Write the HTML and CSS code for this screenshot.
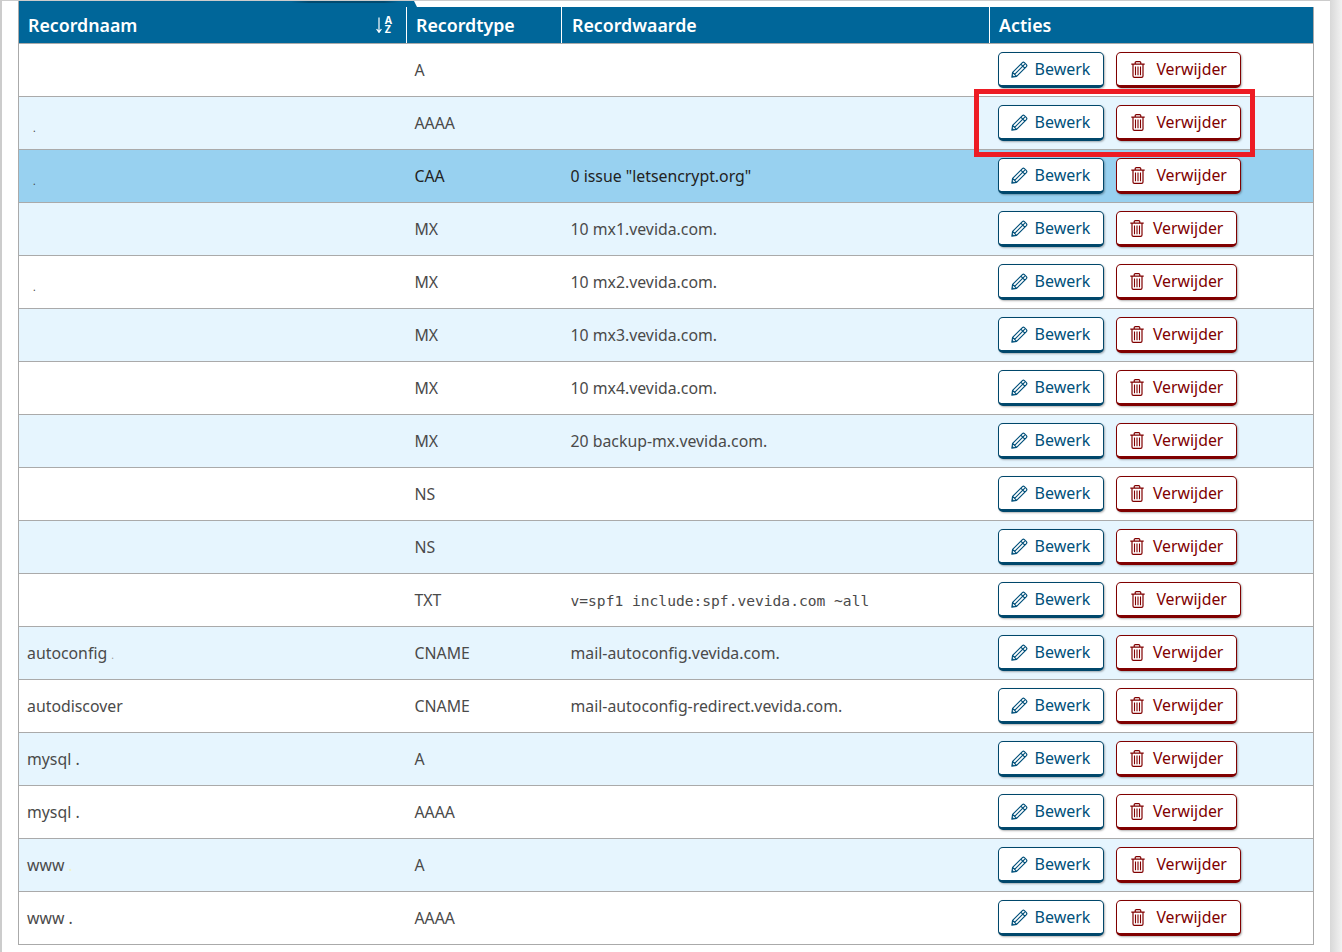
FILE: index.html
```html
<!DOCTYPE html>
<html lang="nl">
<head>
    <meta charset="UTF-8">
    <meta name="viewport" content="width=device-width, initial-scale=1.0">
    <title>DNS records</title>
    <link rel="stylesheet" href="styles.css">
</head>
<body>
    <svg class="icon-defs" width="0" height="0">
        <symbol id="icon-pencil" viewBox="0 0 17 17">
            <path d="M11.4 1.6Q12.4.7 13.4 1.6L15.4 3.6Q16.3 4.6 15.4 5.6L5.6 15.4 .9 16.1 1.6 11.4Z M1.6 11.4 5.6 15.4 M3.6 13.4 13.8 3.2 M9.8 3.2 13.8 7.2" fill="none" stroke="currentColor" stroke-width="1.2" stroke-linejoin="round"/>
            <path d="M.9 16.1 1.3 13.8 3.2 15.7Z" fill="currentColor"/>
        </symbol>
        <symbol id="icon-trash" viewBox="0 0 14 17">
            <path d="M.3 3.2H13.7 M2 3.2V15Q2 16.4 3.4 16.4H10.6Q12 16.4 12 15V3.2 M4.2 3.2V1.8Q4.2 .7 5.3 .7H8.7Q9.8 .7 9.8 1.8V3.2" fill="none" stroke="currentColor" stroke-width="1.2"/>
            <path d="M4.5 5.5V14.2 M7 5.5V14.2 M9.5 5.5V14.2" fill="none" stroke="currentColor" stroke-width="1.1"/>
        </symbol>
        <symbol id="icon-sort" viewBox="0 0 6 16">
            <path d="M3 .5V15 M.6 12 3 15.4 5.4 12" fill="none" stroke="currentColor" stroke-width="1.2"/>
        </symbol>
    </svg>

    <div class="page">
        <div class="tab-strip"></div>
        <table class="records">
            <colgroup>
                <col class="col-name">
                <col class="col-type">
                <col class="col-value">
                <col class="col-actions">
            </colgroup>
            <thead>
                <tr>
                    <th>
                        <div class="th-sort">
                            <span>Recordnaam</span>
                            <span class="sort-icon">
                                <svg width="6" height="16"><use href="#icon-sort"/></svg>
                                <span class="sort-letters">A<br>Z</span>
                            </span>
                        </div>
                    </th>
                    <th>Recordtype</th>
                    <th>Recordwaarde</th>
                    <th>Acties</th>
                </tr>
            </thead>
            <tbody id="rows"></tbody>
        </table>
        <div class="highlight-box"></div>
    </div>

    <script>
        // naam, klein puntje, type, waarde, brede verwijderknop
        const records = [
            ['', '', 'A', '', true],
            ['', 'dot-a', 'AAAA', '', true],
            ['', 'dot-a', 'CAA', '0 issue "letsencrypt.org"', true],
            ['', '', 'MX', '10 mx1.vevida.com.', false],
            ['', 'dot-a', 'MX', '10 mx2.vevida.com.', false],
            ['', '', 'MX', '10 mx3.vevida.com.', false],
            ['', '', 'MX', '10 mx4.vevida.com.', false],
            ['', '', 'MX', '20 backup-mx.vevida.com.', false],
            ['', '', 'NS', '', false],
            ['', '', 'NS', '', false],
            ['', '', 'TXT', 'v=spf1 include:spf.vevida.com ~all', true],
            ['autoconfig', 'dot-c', 'CNAME', 'mail-autoconfig.vevida.com.', false],
            ['autodiscover', '', 'CNAME', 'mail-autoconfig-redirect.vevida.com.', false],
            ['mysql .', '', 'A', '', false],
            ['mysql .', '', 'AAAA', '', false],
            ['www', 'dot-d', 'A', '', true],
            ['www .', '', 'AAAA', '', true]
        ];

        const tbody = document.getElementById('rows');

        records.forEach((r, index) => {
            const tr = document.createElement('tr');
            if (index === 2) {
                tr.className = 'selected';
            } else if (index % 2 === 1) {
                tr.className = 'odd';
            }

            const dot = r[1] ? `<span class="dot ${r[1]}">.</span>` : '';
            const value = r[2] === 'TXT' ? `<code>${r[3]}</code>` : r[3];
            const wide = r[4] ? ' btn-wide' : '';

            tr.innerHTML = `
                <td>${r[0]}${dot}</td>
                <td>${r[2]}</td>
                <td>${value}</td>
                <td class="actions">
                    <a class="btn btn-edit"><svg width="17" height="17"><use href="#icon-pencil"/></svg>Bewerk</a>
                    <a class="btn btn-delete${wide}"><svg width="14" height="17"><use href="#icon-trash"/></svg>Verwijder</a>
                </td>`;
            tbody.appendChild(tr);
        });
    </script>
</body>
</html>
```

FILE: styles.css
```css
* {
    margin: 0;
    padding: 0;
    box-sizing: border-box;
}

html,
body {
    height: 100%;
}

body {
    font-family: "Noto Sans", "Open Sans", sans-serif;
    font-size: 15.84px;
    color: #4a4a4a;
    background:
        linear-gradient(#ccc, #ccc) 0 0 / 1330px 1px no-repeat,
        linear-gradient(90deg, #ccc 0, #ccc 2px, #fff 2px, #fff 1330px, #d8d8d8 1330px, #f2f2f2 1342px);
    overflow: hidden;
}

.icon-defs {
    position: absolute;
}

.page {
    position: relative;
    width: 1342px;
    padding: 7px 0 0 18px;
}

/* rand van de tabbalk boven de tabel */
.tab-strip {
    position: absolute;
    top: 1px;
    left: 18px;
    width: 399px;
    height: 6px;
    border-left: 1px solid #aaa;
    background:
        linear-gradient(90deg, transparent 0, transparent 272px, #004a70 290px, #004a70 365px, transparent 380px) 0 0 / 100% 2px no-repeat,
        #006699;
    clip-path: polygon(0 0, 396px 0, 100% 100%, 0 100%);
}

.records {
    width: 1296px;
    table-layout: fixed;
    border-collapse: collapse;
    border-left: 1px solid #aaa;
    border-right: 1px solid #aaa;
}

.col-name {
    width: 388px;
}

.col-type {
    width: 155px;
}

.col-value {
    width: 428px;
}

.records th {
    height: 36px;
    padding: 0 9px;
    background-color: #006699;
    border-left: 1px solid #fff;
    border-bottom: 1px solid #aaa;
    color: #fff;
    font-size: 17.8px;
    font-weight: 600;
    text-align: left;
}

.records th:first-child {
    border-left: 0;
}

.records th:nth-child(3) {
    padding-left: 10px;
}

.th-sort {
    display: flex;
    justify-content: space-between;
    align-items: center;
}

.sort-icon {
    display: flex;
    align-items: center;
    gap: 3px;
    padding-right: 5px;
}

.sort-letters {
    font-size: 10.5px;
    font-weight: 700;
    line-height: 9px;
}

.records td {
    height: 53px;
    padding: 0 8px;
    border-bottom: 1px solid #aaa;
    vertical-align: middle;
    white-space: nowrap;
}

.records td:nth-child(3) {
    padding-left: 9px;
}

.records tr.odd td {
    background-color: #e6f5fe;
}

.records tr.selected td {
    background-color: #98d1f0;
    color: #222;
}

.records code {
    font-family: "DejaVu Sans Mono", monospace;
    font-size: 14.6px;
}

.dot {
    font-size: 10px;
    margin-left: 6px;
    color: #444;
    vertical-align: -5px;
}

.dot-c {
    margin-left: 4px;
    font-size: 10px;
    color: #999;
    vertical-align: baseline;
}

.dot-d {
    margin-left: 4px;
    font-size: 16px;
    color: #eef2c8;
    vertical-align: baseline;
}

.btn {
    display: inline-flex;
    align-items: center;
    justify-content: center;
    height: 36px;
    vertical-align: middle;
    background-color: #fff;
    border: 1px solid;
    border-bottom-width: 3px;
    border-radius: 5px;
    box-shadow: 1px 1px 2px rgba(0, 0, 0, 0.3);
    text-decoration: none;
    cursor: pointer;
}

.btn svg {
    margin-top: 2px;
}

.btn-edit {
    width: 106px;
    margin-right: 8px;
    gap: 7px;
    font-size: 16px;
    color: #00507a;
    border-color: #00476b;
}

.btn-delete {
    width: 121px;
    padding-left: 1px;
    gap: 9px;
    color: #800000;
    border-color: #800000;
}

.btn-wide {
    width: 125px;
    padding-left: 2px;
    gap: 11px;
}

/* rode markering rond de knoppen */
.highlight-box {
    position: absolute;
    top: 89px;
    left: 974px;
    width: 281px;
    height: 68px;
    border: 5px solid #ed1c24;
}
```
